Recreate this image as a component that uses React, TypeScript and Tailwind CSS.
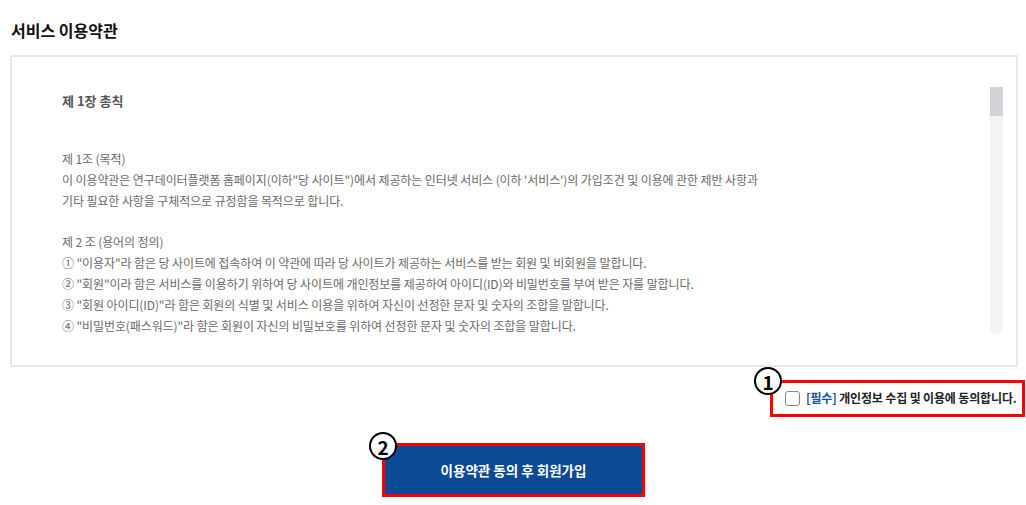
import { useState } from 'react'
import { Check } from 'lucide-react'

const font = { fontFamily: '"Noto Sans CJK KR", "Noto Sans", sans-serif' }

const article1 = [
  '이 이용약관은 연구데이터플랫폼 홈페이지(이하"당 사이트")에서 제공하는 인터넷 서비스 (이하 \'서비스\')의 가입조건 및 이용에 관한 제반 사항과',
  '기타 필요한 사항을 구체적으로 규정함을 목적으로 합니다.',
]

const article2 = [
  '① "이용자"라 함은 당 사이트에 접속하여 이 약관에 따라 당 사이트가 제공하는 서비스를 받는 회원 및 비회원을 말합니다.',
  '② "회원"이라 함은 서비스를 이용하기 위하여 당 사이트에 개인정보를 제공하여 아이디(ID)와 비밀번호를 부여 받은 자를 말합니다.',
  '③ "회원 아이디(ID)"라 함은 회원의 식별 및 서비스 이용을 위하여 자신이 선정한 문자 및 숫자의 조합을 말합니다.',
  '④ "비밀번호(패스워드)"라 함은 회원이 자신의 비밀보호를 위하여 선정한 문자 및 숫자의 조합을 말합니다.',
]

const Badge = ({ n, className }: { n: string; className: string }) => (
  <span
    className={`absolute z-10 flex items-center justify-center w-[28px] h-[28px] rounded-full border-2 border-black bg-white text-[19px] font-bold leading-none text-black ${className}`}
  >
    {n}
  </span>
)

export default function App() {
  const [agree, setAgree] = useState(false)

  return (
    <div className="w-[1026px] h-[505px] bg-white overflow-hidden" style={font}>
      <div className="pl-[10px] pr-[8px] pt-[19px]">
        {/* Title */}
        <h2 className="pl-[1px] text-[16px] font-bold leading-[22px] text-[#111]">서비스 이용약관</h2>

        {/* Terms box */}
        <div className="mt-[14px] h-[312px] border-2 border-[#e8e8e8] flex">
          <div className="flex-1 pl-[50px] pt-[34px] overflow-hidden">
            <h3 className="text-[13px] font-bold leading-[20px] text-[#555]">제 1장 총칙</h3>

            <div className="mt-[37px] text-[12px] leading-[21px] text-[#6a6a6a] tracking-[-0.1px]">
              <p>제 1조 (목적)</p>
              {article1.map((line, i) => (
                <p key={i}>{line}</p>
              ))}
              <p className="mt-[20px]">제 2 조 (용어의 정의)</p>
              {article2.map((line, i) => (
                <p key={i}>{line}</p>
              ))}
            </div>
          </div>

          {/* Scrollbar */}
          <div className="w-[13px] mr-[13px] mt-[30px] mb-[31px] bg-[#f3f3f3] rounded-b-[6px]">
            <div className="h-[29px] bg-[#d2d4d9]" />
          </div>
        </div>
      </div>

      {/* Agreement */}
      <div className="flex justify-end pr-[1px] mt-[13px]">
        <div className="relative">
          <Badge n="1" className="-left-[16px] -top-[13px]" />
          <label className="flex items-center w-[255px] h-[37px] border-[3px] border-[#ff0000] pl-[12px] pb-[1px] cursor-pointer">
            <span
              onClick={() => setAgree(!agree)}
              className="flex items-center justify-center w-[15px] h-[15px] rounded-[3px] border border-[#888] bg-white"
            >
              {agree && <Check className="w-3 h-3 text-[#0d4a96]" />}
            </span>
            <span className="ml-[6px] text-[12px] font-bold leading-none tracking-[-0.15px]">
              <span className="text-[#1d4fa0]">[필수]</span>
              <span className="text-[#222]"> 개인정보 수집 및 이용에 동의합니다.</span>
            </span>
          </label>
        </div>
      </div>

      {/* Submit */}
      <div className="flex justify-center mt-[26px] pr-[1px]">
        <div className="relative ml-[2px]">
          <Badge n="2" className="-left-[13px] -top-[11px]" />
          <button className="w-[263px] h-[54px] border-[3px] border-[#ff0000] bg-[#0d4a96] text-white text-[13.5px] font-bold">
            이용약관 동의 후 회원가입
          </button>
        </div>
      </div>
    </div>
  )
}
